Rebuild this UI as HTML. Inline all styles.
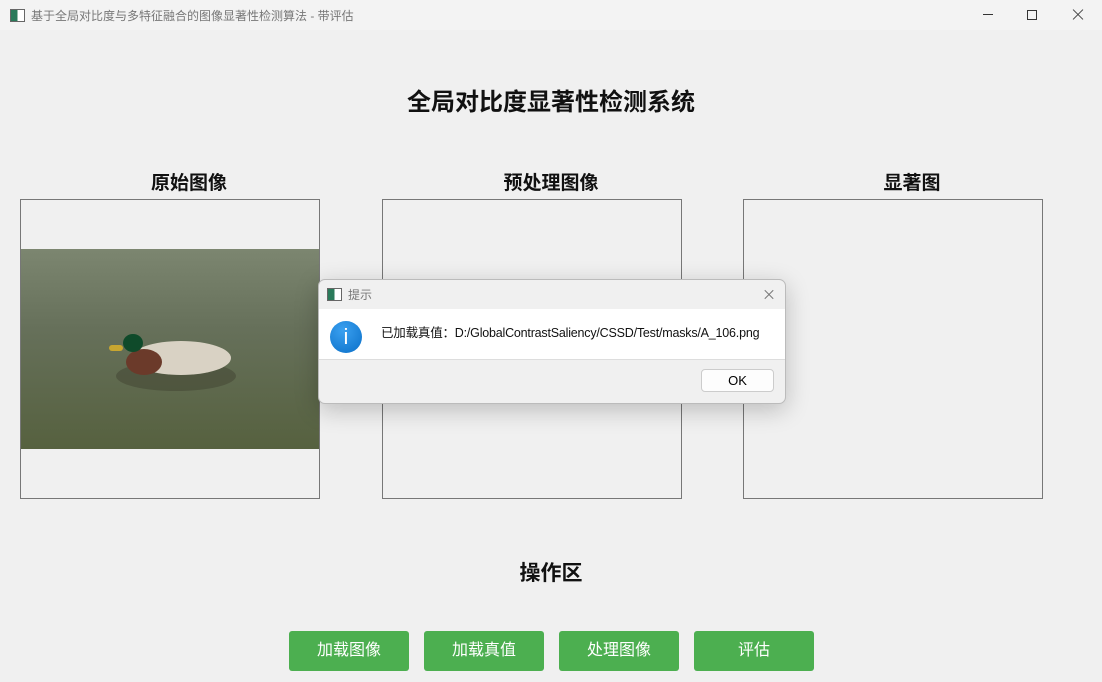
<!DOCTYPE html>
<html><head><meta charset="utf-8"><style>
body{margin:0;width:1102px;height:682px;background:#f0f0f0;font-family:"Liberation Sans","Noto Sans CJK SC",sans-serif;position:relative;overflow:hidden}
.a{position:absolute}
.t{font-weight:bold;color:#111;text-align:center;white-space:nowrap}
.box{border:1px solid #777;width:298px;height:298px;top:199px}
.btn{background:#4caf50;color:#fff;width:120px;height:40px;top:631px;border-radius:3px;text-align:center;line-height:40px;font-size:16px}
.x1,.x2{position:absolute;width:14px;height:1px;background:#444}
.x1{transform:rotate(45deg)}.x2{transform:rotate(-45deg)}
</style></head><body>
<div class="a" style="left:0;top:0;width:1102px;height:30px;background:#f3f3f3"></div>
<div class="a" style="left:10px;top:9px;width:13px;height:11px;border:1px solid #666;background:linear-gradient(90deg,#2a7a5a 50%,#fff 50%)"></div>
<div class="a" style="left:31px;top:7px;font-size:12px;color:#777;white-space:nowrap">基于全局对比度与多特征融合的图像显著性检测算法 - 带评估</div>
<div class="a" style="left:983px;top:14px;width:10px;height:1px;background:#333"></div>
<div class="a" style="left:1027px;top:10px;width:8px;height:8px;border:1px solid #333"></div>
<div class="x1" style="left:1071px;top:14px"></div><div class="x2" style="left:1071px;top:14px"></div>
<div class="a t" style="left:0;width:1102px;top:82px;font-size:24px">全局对比度显著性检测系统</div>
<div class="a t" style="left:20px;width:338px;top:168px;font-size:19px">原始图像</div>
<div class="a t" style="left:382px;width:338px;top:168px;font-size:19px">预处理图像</div>
<div class="a t" style="left:743px;width:338px;top:168px;font-size:19px">显著图</div>
<div class="a box" style="left:20px"></div>
<div class="a box" style="left:382px"></div>
<div class="a box" style="left:743px"></div>
<div class="a" style="left:21px;top:249px;width:298px;height:200px;background:linear-gradient(180deg,#7c8670,#66705a 40%,#56613f 100%)">
<div class="a" style="left:95px;top:112px;width:120px;height:30px;border-radius:50%;background:#3a3a2a;opacity:.4"></div>
<div class="a" style="left:110px;top:92px;width:100px;height:34px;border-radius:50%;background:#d9d2c4"></div>
<div class="a" style="left:105px;top:100px;width:36px;height:26px;border-radius:50%;background:#6b3a2a"></div>
<div class="a" style="left:102px;top:85px;width:20px;height:18px;border-radius:50%;background:#0f4a2a"></div>
<div class="a" style="left:88px;top:96px;width:14px;height:6px;background:#c8a630;border-radius:3px"></div>
</div>
<div class="a t" style="left:0;width:1102px;top:557px;font-size:21px">操作区</div>
<div class="a btn" style="left:289px">加载图像</div>
<div class="a btn" style="left:424px">加载真值</div>
<div class="a btn" style="left:559px">处理图像</div>
<div class="a btn" style="left:694px">评估</div>
<div class="a" style="left:318px;top:279px;width:466px;height:123px;border:1px solid #bbb;border-radius:7px;background:#f0f0f0;box-shadow:0 6px 24px rgba(0,0,0,.22);overflow:hidden">
<div class="a" style="left:8px;top:8px;width:13px;height:11px;border:1px solid #666;background:linear-gradient(90deg,#2a7a5a 50%,#fff 50%)"></div>
<div class="a" style="left:29px;top:6px;font-size:12px;color:#777">提示</div>
<div class="x1" style="left:444px;top:14px;width:12px;background:#777"></div><div class="x2" style="left:444px;top:14px;width:12px;background:#777"></div>
<div class="a" style="left:0;top:29px;width:466px;height:50px;background:#fff;border-bottom:1px solid #ddd"></div>
<div class="a" style="left:11px;top:41px;width:32px;height:32px;border-radius:50%;background:radial-gradient(circle at 40% 30%,#3aa0f0,#0a6fc8);color:#fff;text-align:center;font-size:22px;line-height:32px">i</div>
<div class="a" style="left:62px;top:42px;font-size:12.5px;color:#111;white-space:nowrap;letter-spacing:-0.2px">已加载真值：D:/GlobalContrastSaliency/CSSD/Test/masks/A_106.png</div>
<div class="a" style="left:382px;top:89px;width:71px;height:21px;border:1px solid #ccc;border-radius:4px;background:#fdfdfd;text-align:center;line-height:21px;font-size:13px">OK</div>
</div>
</body></html>
